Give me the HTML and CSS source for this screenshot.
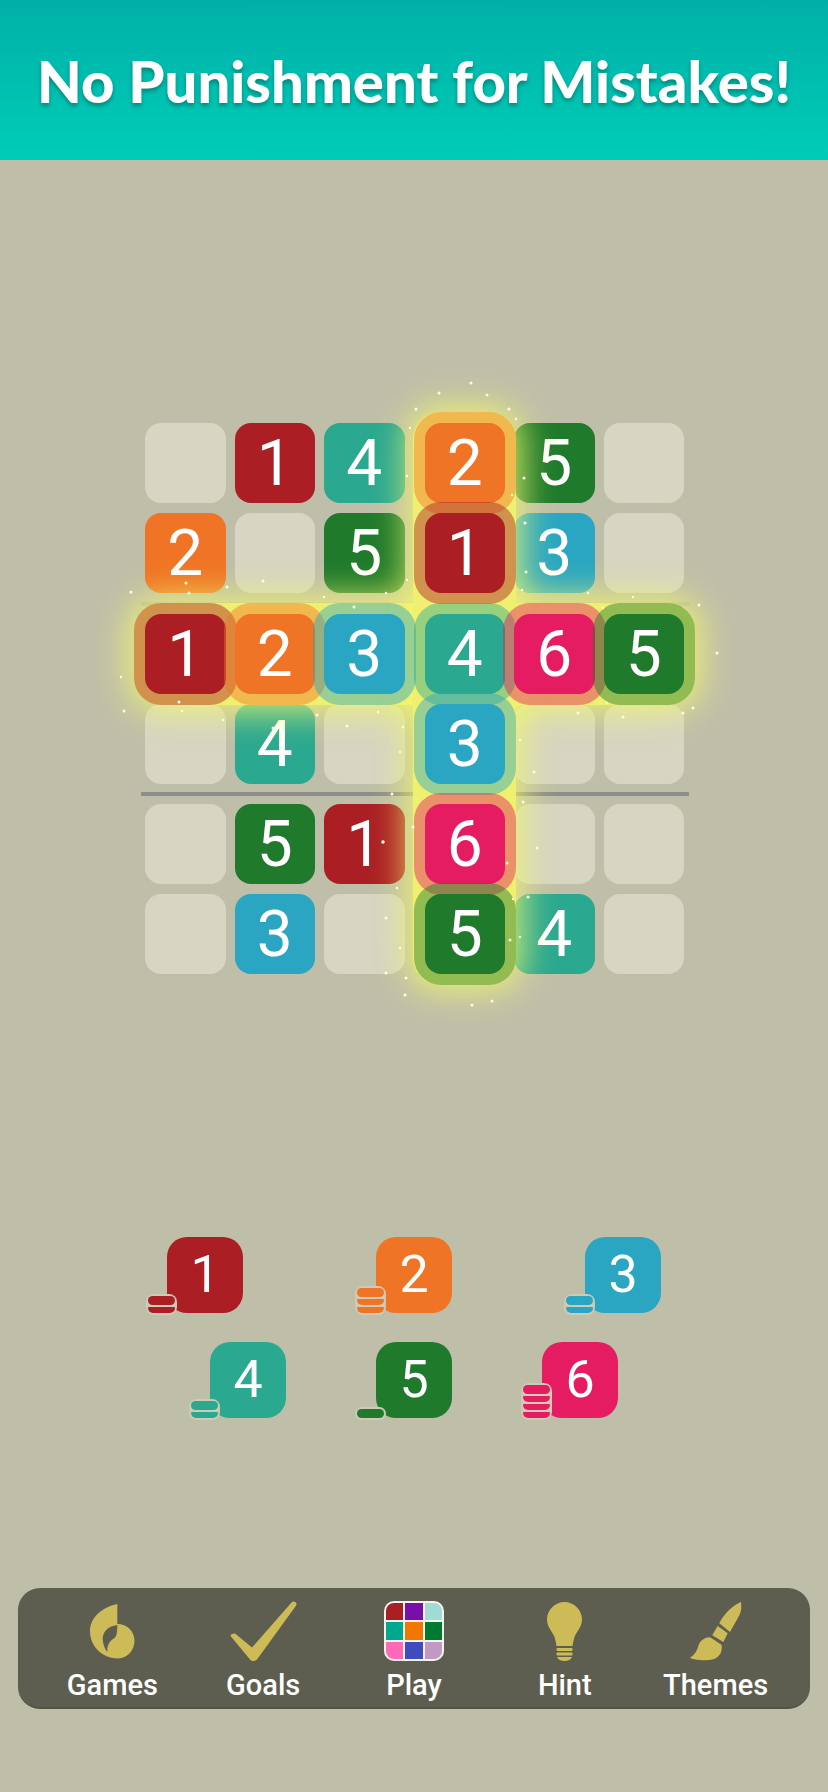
FILE: index.html
```html
<!DOCTYPE html>
<html lang="en">

<head>
    <meta charset="UTF-8">
    <meta name="viewport" content="width=device-width, initial-scale=1.0">
    <title>No Punishment for Mistakes</title>
    <link rel="stylesheet" href="styles.css">
</head>

<body>
    <header class="banner">
        <h1>No Punishment for Mistakes!</h1>
    </header>

    <main class="game">
        <div class="board">
            <div class="glow glow-across"></div>
            <div class="glow glow-down"></div>

            <div class="row">
                <div class="cell"></div>
                <div class="cell c1">1</div>
                <div class="cell c4">4</div>
                <div class="cell c2 hot">2</div>
                <div class="cell c5">5</div>
                <div class="cell"></div>
            </div>
            <div class="row">
                <div class="cell c2">2</div>
                <div class="cell"></div>
                <div class="cell c5">5</div>
                <div class="cell c1 hot">1</div>
                <div class="cell c3">3</div>
                <div class="cell"></div>
            </div>
            <div class="rule rule-under"></div>
            <div class="row">
                <div class="cell c1 hot">1</div>
                <div class="cell c2 hot">2</div>
                <div class="cell c3 hot">3</div>
                <div class="cell c4 hot">4</div>
                <div class="cell c6 hot">6</div>
                <div class="cell c5 hot">5</div>
            </div>
            <div class="row">
                <div class="cell"></div>
                <div class="cell c4">4</div>
                <div class="cell"></div>
                <div class="cell c3 hot">3</div>
                <div class="cell"></div>
                <div class="cell"></div>
            </div>
            <div class="rule rule-low"></div>
            <div class="row">
                <div class="cell"></div>
                <div class="cell c5">5</div>
                <div class="cell c1">1</div>
                <div class="cell c6 hot">6</div>
                <div class="cell"></div>
                <div class="cell"></div>
            </div>
            <div class="row">
                <div class="cell"></div>
                <div class="cell c3">3</div>
                <div class="cell"></div>
                <div class="cell c5 hot">5</div>
                <div class="cell c4">4</div>
                <div class="cell"></div>
            </div>

            <!-- sparkles, in page coordinates -->
            <svg class="sparks" viewBox="0 0 828 1792" fill="#fffde0">
                <circle cx="416" cy="409" r="1.5"/><circle cx="410" cy="428" r="1.2"/><circle cx="407" cy="476" r="1.2"/>
                <circle cx="186" cy="583" r="1.5"/><circle cx="189" cy="593" r="1.5"/><circle cx="131" cy="592" r="1.5"/>
                <circle cx="227" cy="587" r="1.5"/><circle cx="263" cy="581" r="1.5"/><circle cx="324" cy="597" r="1.2"/>
                <circle cx="386" cy="593" r="1.2"/><circle cx="407" cy="580" r="1.2"/><circle cx="354" cy="607" r="1.5"/>
                <circle cx="121" cy="677" r="1.2"/><circle cx="179" cy="702" r="1.5"/><circle cx="317" cy="715" r="1.5"/>
                <circle cx="471" cy="383" r="1.5"/><circle cx="439" cy="393" r="1.5"/><circle cx="487" cy="395" r="1.5"/>
                <circle cx="509" cy="409" r="1.5"/><circle cx="516" cy="419" r="1.2"/><circle cx="524" cy="478" r="1.5"/>
                <circle cx="512" cy="495" r="1.2"/><circle cx="525" cy="523" r="1.5"/><circle cx="526" cy="572" r="1.5"/>
                <circle cx="522" cy="590" r="1.2"/><circle cx="588" cy="593" r="1.2"/><circle cx="633" cy="597" r="1.2"/>
                <circle cx="699" cy="605" r="1.5"/><circle cx="717" cy="653" r="1.5"/><circle cx="693" cy="708" r="1.5"/>
                <circle cx="683" cy="713" r="1.5"/><circle cx="578" cy="713" r="1.5"/><circle cx="607" cy="703" r="1.2"/>
                <circle cx="603" cy="608" r="1.2"/><circle cx="124" cy="711" r="1.5"/><circle cx="182" cy="711" r="1.2"/>
                <circle cx="223" cy="720" r="1.2"/><circle cx="273" cy="728" r="1.5"/><circle cx="347" cy="726" r="1.5"/>
                <circle cx="378" cy="712" r="1.2"/><circle cx="403" cy="727" r="1.2"/><circle cx="400" cy="752" r="1.2"/>
                <circle cx="392" cy="794" r="1.5"/><circle cx="383" cy="842" r="1.7"/><circle cx="413" cy="827" r="1.5"/>
                <circle cx="397" cy="888" r="1.2"/><circle cx="386" cy="918" r="1.5"/><circle cx="400" cy="948" r="1.2"/>
                <circle cx="386" cy="973" r="1.5"/><circle cx="406" cy="978" r="1.5"/><circle cx="405" cy="995" r="1.5"/>
                <circle cx="623" cy="717" r="1.5"/><circle cx="520" cy="740" r="1.2"/><circle cx="534" cy="772" r="1.5"/>
                <circle cx="523" cy="802" r="1.5"/><circle cx="537" cy="848" r="1.5"/><circle cx="507" cy="863" r="1.5"/>
                <circle cx="513" cy="899" r="1.2"/><circle cx="528" cy="897" r="1.5"/><circle cx="510" cy="940" r="1.5"/>
                <circle cx="520" cy="937" r="1.2"/><circle cx="472" cy="1005" r="1.5"/><circle cx="492" cy="1001" r="1.5"/>
            </svg>
        </div>

        <div class="tray">
            <div class="tray-row tray-row-wide">
                <div class="tile c1">1
                    <div class="stack"><span class="coin"></span><span class="coin"></span></div>
                </div>
                <div class="tile c2">2
                    <div class="stack"><span class="coin"></span><span class="coin"></span><span class="coin"></span></div>
                </div>
                <div class="tile c3">3
                    <div class="stack"><span class="coin"></span><span class="coin"></span></div>
                </div>
            </div>
            <div class="tray-row">
                <div class="tile c4">4
                    <div class="stack"><span class="coin"></span><span class="coin"></span></div>
                </div>
                <div class="tile c5">5
                    <div class="stack"><span class="coin"></span></div>
                </div>
                <div class="tile c6">6
                    <div class="stack"><span class="coin"></span><span class="coin"></span><span class="coin"></span><span class="coin"></span></div>
                </div>
            </div>
        </div>

        <nav class="toolbar">
            <div class="tool">
                <div class="tool-icon">
                    <svg width="45" height="55" viewBox="0 0 45 55" class="gold">
                        <path fill-rule="evenodd" d="M27.300 0C12 3 0 14 0 27C0 43 13 54.500 28 54.500C37.500 54.500 44.500 46 44.500 37C44.500 27 37 20 27.300 20ZM27.300 21C17 22 12.500 29 12.700 35C13 41 15 45 17.500 48.500C16.500 43 19 37 24 34.500C27 32.500 27.300 27 27.300 21Z"/>
                    </svg>
                </div>
                <span>Games</span>
            </div>
            <div class="tool">
                <div class="tool-icon">
                    <svg width="67" height="61" viewBox="0 0 67 61" class="gold">
                        <path d="M1 35.500C0 34 1 33 5 32.500L22 46.500L62 1C64 -0.500 67 1.500 66.500 4L27 58.500C25 60.500 22 60.500 20 58.500Z"/>
                    </svg>
                </div>
                <span>Goals</span>
            </div>
            <div class="tool">
                <div class="tool-icon">
                    <div class="palette">
                        <i class="p1"></i><i class="p2"></i><i class="p3"></i>
                        <i class="p4"></i><i class="p5"></i><i class="p6"></i>
                        <i class="p7"></i><i class="p8"></i><i class="p9"></i>
                    </div>
                </div>
                <span>Play</span>
            </div>
            <div class="tool">
                <div class="tool-icon">
                    <svg width="35" height="59" viewBox="0 0 35 59" class="gold">
                        <path d="M17.500 0C27 0 35 8 35 17.500C35 25 30 29 27.500 35C26.500 38 26 41 25.500 44H9.500C9 41 8.500 38 7.500 35C5 29 0 25 0 17.500C0 8 8 0 17.500 0Z"/>
                        <rect x="9.500" y="46" width="16" height="3" rx="1"/>
                        <rect x="9.500" y="50.500" width="16" height="3" rx="1"/>
                        <path d="M10 55H25C24 57.500 21 59 17.500 59C14 59 11 57.500 10 55Z"/>
                    </svg>
                </div>
                <span>Hint</span>
            </div>
            <div class="tool">
                <div class="tool-icon">
                    <svg width="55" height="61" viewBox="0 0 55 61" class="gold">
                        <path d="M53 1C54 8 52.500 13 49.300 18L42 31L31.300 22.300C34 17 37 13 40 10C44 6 48 3 53 1Z"/>
                        <path d="M29.700 25L39.700 32.300L35.300 41L24.300 34.300Z"/>
                        <path d="M15.300 38.300C18 36.500 20.500 35.500 23 36.700L33.700 44C34 48 33.500 51 32 53.300C30 56 28 57.500 25.300 58.300C21 59.500 16 59.500 12 59C8 58.800 4 58 2 56.700C4 55.500 5.500 54 7 52.300C9 49.500 9.500 47.500 10.300 45C11 42 13 40 15.300 38.300Z"/>
                    </svg>
                </div>
                <span>Themes</span>
            </div>
        </nav>
    </main>
</body>

</html>
```

FILE: styles.css
```css
* {
    box-sizing: border-box;
}

html,
body {
    margin: 0;
    height: 100%;
}

body {
    display: flex;
    flex-direction: column;
    height: 1792px;
    overflow: hidden;
    background: #bfbfa9;
    font-family: Roboto, sans-serif;
    color: white;
}

.banner {
    height: 160px;
    display: flex;
    align-items: center;
    justify-content: center;
    background: linear-gradient(#00b0a8, #00cdb7);
}

.banner h1 {
    margin: 0;
    font-family: Lato, sans-serif;
    font-size: 58px;
    font-weight: 900;
    white-space: nowrap;
    text-shadow: 0 3px 4px rgba(0, 0, 0, 0.3);
}

.game {
    flex: 1;
    display: flex;
    flex-direction: column;
}

.board {
    position: relative;
    width: 540px;
    margin: 263px 0 0 145px;
}

.row {
    display: flex;
    gap: 9px;
    margin-bottom: 9.5px;
}

.rule {
    height: 4px;
    margin: -0.5px -4px 8.5px;
    background: #8e8e88;
}

.rule-under {
    opacity: 0.3;
}

.rule-low {
    margin-top: -1.5px;
}

.cell {
    width: 80.5px;
    height: 80px;
    padding-top: 1px;
    border-radius: 16px;
    background: #d6d6c2;
    display: flex;
    align-items: center;
    justify-content: center;
    font-size: 64px;
}

.cell:nth-child(3) {
    margin-right: 11px;
}

.row:last-of-type {
    margin-bottom: 0;
}

/* colours, the ring is the same colour see through */
.c1 {
    background: #ab1f24;
    --ring: rgba(171, 31, 36, 0.45);
}

.c2 {
    background: #f07425;
    --ring: rgba(240, 116, 37, 0.45);
}

.c3 {
    background: #2aa6c2;
    --ring: rgba(42, 166, 194, 0.45);
}

.c4 {
    background: #2ba890;
    --ring: rgba(43, 168, 144, 0.45);
}

.c5 {
    background: #1f7a2c;
    --ring: rgba(31, 122, 44, 0.45);
}

.c6 {
    background: #e51c62;
    --ring: rgba(229, 28, 98, 0.45);
}

.hot {
    position: relative;
    z-index: 3;
    box-shadow: 0 0 0 11px var(--ring);
}

/* yellow light under the highlighted row and column */
.glow {
    position: absolute;
    z-index: 2;
    border-radius: 27px;
    background: #f0f070;
    box-shadow: 0 0 32px 8px rgba(240, 246, 110, 0.8);
}

.glow-across {
    left: -11px;
    top: 180px;
    width: 561px;
    height: 102px;
}

.glow-down {
    left: 268px;
    top: -11px;
    width: 103px;
    height: 573px;
}

.sparks {
    position: absolute;
    z-index: 4;
    left: -145px;
    top: -423px;
    width: 828px;
    height: 1792px;
    pointer-events: none;
}

.tray {
    display: flex;
    flex-direction: column;
    gap: 29px;
    margin-top: 263px;
}

.tray-row {
    display: flex;
    justify-content: center;
    gap: 90px;
}

.tray-row-wide {
    gap: 133px;
}

.tile {
    position: relative;
    width: 76px;
    height: 76px;
    border-radius: 20px;
    display: flex;
    align-items: center;
    justify-content: center;
    font-size: 52px;
}

.stack {
    position: absolute;
    right: 66px;
    bottom: -2px;
    width: 31px;
    padding: 2px;
    display: flex;
    flex-direction: column;
    gap: 2px;
    border-radius: 8px;
    background: #cdcbb6;
}

.coin {
    height: 6px;
    border-radius: 1px 1px 5px 5px;
}

.c1 .coin {
    background: #ab1f24;
}

.c2 .coin {
    background: #f07425;
}

.c3 .coin {
    background: #2aa6c2;
}

.c4 .coin {
    background: #2ba890;
}

.c5 .coin {
    background: #1f7a2c;
}

.c6 .coin {
    background: #e51c62;
}

.coin:first-child {
    height: 9px;
    border-radius: 5px;
}

.toolbar {
    display: flex;
    height: 121px;
    margin: auto 18px 83px;
    padding: 12px 19px 0;
    border-radius: 22px;
    background: #5e5e50;
    border-bottom: 2px solid #525246;
}

.tool {
    flex: 1;
    display: flex;
    flex-direction: column;
    align-items: center;
    font-size: 29px;
    font-weight: 500;
    line-height: 34px;
}

.tool-icon {
    height: 62px;
    margin-bottom: 6px;
    display: flex;
    align-items: center;
    justify-content: center;
}

.gold {
    fill: #cdbb57;
}

.palette {
    width: 60px;
    height: 60px;
    padding: 2px;
    display: grid;
    grid-template-columns: repeat(3, 1fr);
    grid-template-rows: repeat(3, 1fr);
    gap: 2px;
    overflow: hidden;
    border-radius: 10px;
    background: #f4f4ee;
}

.p1 { background: #ab1f24; border-top-left-radius: 8px; }
.p2 { background: #7a0ea8; }
.p3 { background: #a0dcd4; border-top-right-radius: 8px; }
.p4 { background: #00a890; }
.p5 { background: #f07800; }
.p6 { background: #007a30; }
.p7 { background: #ff69b8; border-bottom-left-radius: 8px; }
.p8 { background: #3f4cc0; }
.p9 { background: #c09ac4; border-bottom-right-radius: 8px; }
```
